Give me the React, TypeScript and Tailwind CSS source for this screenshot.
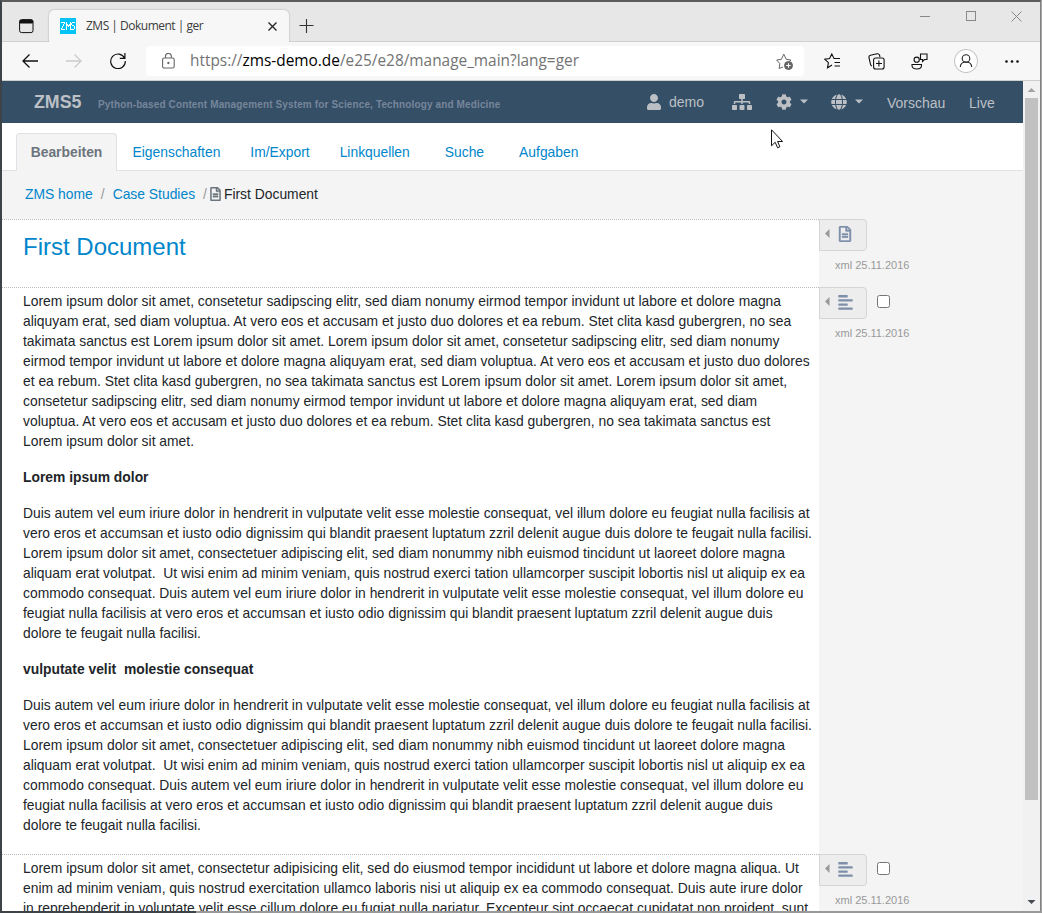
import type { ReactNode } from "react";
import { FaUser, FaSitemap, FaCog, FaGlobe, FaRegFileAlt } from "react-icons/fa";

const INTRO = [
  "Lorem ipsum dolor sit amet, consetetur sadipscing elitr, sed diam nonumy eirmod tempor invidunt ut labore et dolore magna",
  "aliquyam erat, sed diam voluptua. At vero eos et accusam et justo duo dolores et ea rebum. Stet clita kasd gubergren, no sea",
  "takimata sanctus est Lorem ipsum dolor sit amet. Lorem ipsum dolor sit amet, consetetur sadipscing elitr, sed diam nonumy",
  "eirmod tempor invidunt ut labore et dolore magna aliquyam erat, sed diam voluptua. At vero eos et accusam et justo duo dolores",
  "et ea rebum. Stet clita kasd gubergren, no sea takimata sanctus est Lorem ipsum dolor sit amet. Lorem ipsum dolor sit amet,",
  "consetetur sadipscing elitr, sed diam nonumy eirmod tempor invidunt ut labore et dolore magna aliquyam erat, sed diam",
  "voluptua. At vero eos et accusam et justo duo dolores et ea rebum. Stet clita kasd gubergren, no sea takimata sanctus est",
  "Lorem ipsum dolor sit amet.",
];

const DUIS = [
  "Duis autem vel eum iriure dolor in hendrerit in vulputate velit esse molestie consequat, vel illum dolore eu feugiat nulla facilisis at",
  "vero eros et accumsan et iusto odio dignissim qui blandit praesent luptatum zzril delenit augue duis dolore te feugait nulla facilisi.",
  "Lorem ipsum dolor sit amet, consectetuer adipiscing elit, sed diam nonummy nibh euismod tincidunt ut laoreet dolore magna",
  "aliquam erat volutpat.  Ut wisi enim ad minim veniam, quis nostrud exerci tation ullamcorper suscipit lobortis nisl ut aliquip ex ea",
  "commodo consequat. Duis autem vel eum iriure dolor in hendrerit in vulputate velit esse molestie consequat, vel illum dolore eu",
  "feugiat nulla facilisis at vero eros et accumsan et iusto odio dignissim qui blandit praesent luptatum zzril delenit augue duis",
  "dolore te feugait nulla facilisi.",
];

const LAST = [
  "Lorem ipsum dolor sit amet, consectetur adipisicing elit, sed do eiusmod tempor incididunt ut labore et dolore magna aliqua. Ut",
  "enim ad minim veniam, quis nostrud exercitation ullamco laboris nisi ut aliquip ex ea commodo consequat. Duis aute irure dolor",
  "in reprehenderit in voluptate velit esse cillum dolore eu fugiat nulla pariatur. Excepteur sint occaecat cupidatat non proident, sunt",
];

function Paragraph({ lines }: { lines: string[] }) {
  return (
    <p className="mb-4 text-[13.875px] leading-5 whitespace-pre text-[#212529]">
      {lines.map((line, i) => (
        <span key={i} className="block">
          {line}
        </span>
      ))}
    </p>
  );
}

function Subheading({ children }: { children: ReactNode }) {
  return (
    <h2 className="mb-4 text-[13.875px] leading-5 font-bold whitespace-pre text-[#212529]">{children}</h2>
  );
}

function DocIcon() {
  return (
    <FaRegFileAlt className="-ml-[2px] mb-[2px] size-4" stroke="currentColor" strokeWidth={14} />
  );
}

function TextIcon() {
  return (
    <svg className="-ml-px mb-px h-[15px] w-[15px]" viewBox="0 0 15 15" fill="currentColor">
      <rect x=".3" y="0" width="9.400" height="2.400" rx=".5" />
      <rect x=".3" y="4.200" width="14.400" height="2.400" rx=".5" />
      <rect x=".3" y="8.400" width="9.400" height="2.400" rx=".5" />
      <rect x=".3" y="12.400" width="14.400" height="2.400" rx=".5" />
    </svg>
  );
}

function DownCaret() {
  return (
    <svg className="mb-px ml-2 h-[5px] w-2" viewBox="0 0 8 5" fill="currentColor">
      <path d="M0 .5h8L4 4.500z" />
    </svg>
  );
}

function Section({
  icon,
  checkbox,
  height,
  children,
}: {
  icon: ReactNode;
  checkbox?: boolean;
  height: string;
  children: ReactNode;
}) {
  return (
    <section className={`flex shrink-0 ${height}`}>
      <div className="w-[817px] shrink-0 overflow-hidden border-t border-dotted border-[#bbb] bg-white pl-[21px]">
        {children}
      </div>
      <aside className="flex-1">
        <div className="flex items-center">
          <div className="flex h-8 w-12 items-center rounded-r-[4px] border border-[#d5d5d5] bg-[#ededed]">
            <svg className="mb-[3px] ml-[5px] h-[9px] w-[5px]" viewBox="0 0 5 9" fill="#999">
              <path d="M4.500 0v9L0 4.500z" />
            </svg>
            <span className="ml-[9px] text-[#7e8fa9]">{icon}</span>
          </div>
          {checkbox && (
            <span className="mb-[3px] ml-[10px] size-[13px] rounded-[2.5px] border border-[#767676] bg-white" />
          )}
        </div>
        <div className="mt-[6px] ml-4 text-[11px] leading-4 text-[#999]">xml 25.11.2016</div>
      </aside>
    </section>
  );
}

function TitleBar() {
  return (
    <div className="flex h-10 shrink-0 border-b border-[#d0d0d0] bg-[#e7e7e7]">
      <svg className="mt-[17px] ml-[17px] size-[15px]" viewBox="0 0 15 15" fill="none" stroke="#111">
        <rect x=".6" y=".6" width="13.4" height="13" rx="2" />
        <path d="M1 1.5h12.6v2.500H1z" fill="#111" />
      </svg>
      <div className="mt-2 -mb-px ml-[15px] flex h-8 w-[240px] items-center rounded-t-[5px] bg-[#f7f7f7] shadow-[0_0_2px_rgba(0,0,0,0.3)] [clip-path:inset(-3px_-3px_0_-3px)]">
        <svg className="ml-[11px] size-4" viewBox="0 0 16 16" shapeRendering="crispEdges">
          <rect width="16" height="16" fill="#00c3f7" />
          <path
            d="M1 4.500h4M4.500 5v1M3.500 6v2M2.500 8v2M1.500 10v1M1 11.500h4M6.500 4v8M10.500 4v8M7.500 6v2M9.500 6v2M8.500 7v2M15 4.500h-3M11.500 5v2M12 7.500h2M14.500 8v3M11 11.500h3"
            stroke="#fff"
            fill="none"
          />
        </svg>
        <span className="ml-[10px] font-['Open_Sans','Noto_Sans',sans-serif] text-[12px] tracking-[-0.5px] text-[#3b3b3b]">
          ZMS | Dokument | ger
        </span>
        <svg className="mr-3 ml-auto size-[9px]" viewBox="0 0 9 9" stroke="#222" strokeWidth="1.3">
          <path d="M.5.5l8 8M8.500.5l-8 8" />
        </svg>
      </div>
      <svg className="mt-[17px] ml-[10px] size-[15px]" viewBox="0 0 15 15" stroke="#333" fill="none">
        <path d="M.5 6.500h14M7.500 0v14" strokeWidth="1.1" />
      </svg>
      <div className="ml-auto flex gap-[35px] pt-[9px] pr-[18px]">
        <svg className="size-[11px]" viewBox="0 0 11 11" stroke="#888" fill="none">
          <path d="M1 5.500h10" />
        </svg>
        <svg className="size-[11px]" viewBox="0 0 11 11" stroke="#888" fill="none">
          <rect x="1.500" y=".5" width="9" height="9" />
        </svg>
        <svg className="size-[11px]" viewBox="0 0 11 11" stroke="#888" fill="none">
          <path d="M.5.5l10 10M10.500.5l-10 10" />
        </svg>
      </div>
    </div>
  );
}

function Toolbar() {
  return (
    <div className="flex h-[39px] shrink-0 items-center border-b border-[#ccd0cc] bg-[#f7f7f7] text-black">
      <svg className="ml-5 h-[14px] w-4" viewBox="0 0 16 14" fill="none" stroke="#111" strokeWidth="1.3">
        <path d="M16 7H1M7.500.5L1 7l6.500 6.500" />
      </svg>
      <svg className="ml-7 h-[14px] w-4" viewBox="0 0 16 14" fill="none" stroke="#ccc" strokeWidth="1.3">
        <path d="M0 7h15M8.500.5L15 7l-6.500 6.500" />
      </svg>
      <svg className="ml-[28px] size-4" viewBox="0 0 16 16" fill="none" stroke="#111" strokeWidth="1.200">
        <path d="M14.600 5.200A7.300 7.300 0 1 0 15.300 8M14.900 0v5.300H9.800" />
      </svg>
      <div className="ml-5 flex h-[30px] w-[658px] items-center rounded-[4px] bg-white">
        <svg className="ml-4 h-4 w-[13px]" viewBox="0 0 13 16" fill="none" stroke="#666" strokeWidth="1.1">
          <rect x=".6" y="5" width="11.600" height="10" rx="1.500" />
          <path d="M3.500 5V3a2.900 2.500 0 0 1 5.800 0v2" />
          <circle cx="6.400" cy="10" r=".6" fill="#666" />
        </svg>
        <span className="ml-[15px] font-['Open_Sans','Noto_Sans',sans-serif] text-[15.400px] whitespace-nowrap text-[#737373]">
          https://<span className="text-black">zms-demo.de</span>/e25/e28/manage_main?lang=ger
        </span>
        <svg className="mr-[11px] ml-auto size-[17px]" viewBox="0 0 17 17" fill="none" stroke="#666">
          <path d="M7 14l-3.900 1.500.8-4.800L.7 7l4.700-.7L7.800 1.200l2.400 5.100 4.700.7-2 2" />
          <circle cx="12.500" cy="12.500" r="4" fill="#666" />
          <path d="M10.200 12.500h4.600M12.500 10.200v4.600" stroke="#fff" />
        </svg>
      </div>
      <svg className="ml-[20px] h-[16px] w-[17px]" viewBox="0 0 17 16" fill="none" stroke="#111" strokeWidth="1.1">
        <path d="M8 12l-4.500 2.800.9-5.100L.7 6.200l4.900-.7L7.800 1l2.200 4.500H16M10.500 9.500H16M10.500 13H16" />
      </svg>
      <svg className="ml-[27px] size-[17px]" viewBox="0 0 17 17" fill="none" stroke="#111" strokeWidth="1.1">
        <path d="M4 13c-1-.3-1.300-.8-1.500-1.700L1 4.700C.7 3.400 1.300 2.600 2.500 2.300L9 .8c1.200-.3 2 .2 2.500 1.200L12 4" />
        <rect x="5.600" y="5" width="10.500" height="11" rx="2" />
        <path d="M10.900 7.500v6M8 10.500h6" />
      </svg>
      <svg className="ml-[26px] size-[17px]" viewBox="0 0 17 17" fill="none" stroke="#111" strokeWidth="1.1">
        <circle cx="5.700" cy="6.700" r="2.600" />
        <path d="M1 11.500h9.500v1c0 2-1.800 3.500-4.700 3.500S1 14.500 1 12.500zM9.500 1H16v5.500h-2.500l-2 2v-2h-2z" />
      </svg>
      <svg className="ml-[26px] size-6" viewBox="0 0 24 24" fill="none" stroke="#222" strokeWidth="1.1">
        <circle cx="12" cy="12" r="11.500" fill="#fff" stroke="#c5c5c5" />
        <circle cx="12" cy="9.500" r="3.800" />
        <path d="M6.300 18c.2-3 2-5 5.700-5s5.500 2 5.700 5" />
      </svg>
      <svg className="ml-[27px] h-[3px] w-[14px]" viewBox="0 0 14 3" fill="#111">
        <circle cx="1.500" cy="1.500" r="1.300" />
        <circle cx="7" cy="1.500" r="1.300" />
        <circle cx="12.500" cy="1.500" r="1.300" />
      </svg>
    </div>
  );
}

function NavBar() {
  return (
    <nav className="flex h-[42px] shrink-0 items-center bg-[#354f67] text-[14px] text-[#bcc0c5]">
      <strong className="ml-8 w-16 text-[17.800px]">ZMS5</strong>
      <span className="w-[548px] pt-[5px] text-[10px] font-bold tracking-[0.13px] whitespace-nowrap text-[#75869a]">
        Python-based Content Management System for Science, Technology and Medicine
      </span>
      <FaUser className="h-4 w-4" />
      <span className="ml-[7px] w-[63px]">demo</span>
      <FaSitemap className="h-4 w-5" />
      <FaCog className="ml-6 size-4" />
      <DownCaret />
      <FaGlobe className="ml-[23px] size-4" />
      <DownCaret />
      <span className="ml-6 w-[82px] pt-[2px]">Vorschau</span>
      <span className="pt-[2px]">Live</span>
    </nav>
  );
}

function Tabs() {
  return (
    <div className="flex h-12 shrink-0 items-end border-b border-[#dee2e6] bg-white text-[13.875px] text-[#0086cb]">
      <div className="-mb-px ml-[14px] flex h-[38px] w-[101px] items-center justify-center rounded-t-[4px] border border-b-0 border-[#dee2e6] bg-[#f4f4f4] font-bold text-[#6c757d]">
        Bearbeiten
      </div>
      <div className="flex h-[37px] items-center gap-[30px] pt-px pl-[15.5px]">
        <span>Eigenschaften</span>
        <span>Im/Export</span>
        <span>Linkquellen</span>
        <span className="ml-[5px]">Suche</span>
        <span className="ml-[5px]">Aufgaben</span>
      </div>
    </div>
  );
}

function ScrollBar() {
  return (
    <div className="flex w-[17px] shrink-0 flex-col items-center bg-[#f1f1f1]">
      <svg className="h-[17px] w-[17px] shrink-0" viewBox="0 0 17 17" fill="#a3a3a3">
        <path d="M4.500 11L8.500 7l4 4z" />
      </svg>
      <div className="h-[702px] w-[13px] shrink-0 bg-[#c1c1c1]" />
      <svg className="mt-auto h-[17px] w-[17px] shrink-0" viewBox="0 0 17 17" fill="#444a50">
        <path d="M4.500 6L8.500 10l4-4z" />
      </svg>
    </div>
  );
}

export default function App() {
  return (
    <div className="relative flex h-[913px] w-[1042px] flex-col overflow-hidden bg-[#a5a5a5] font-['Liberation_Sans',Arial,sans-serif]">
      <div className="flex h-[911px] w-[1041px] shrink-0 flex-col border-t-2 border-r border-l-2 border-t-[#5c5c5c] border-r-[#828282] border-l-[#3d4347]">
        <TitleBar />
        <Toolbar />
        <div className="flex min-h-0 flex-1">
          <main className="flex w-[1021px] shrink-0 flex-col overflow-hidden bg-[#f4f4f4]">
            <NavBar />
            <Tabs />
            <div className="flex h-12 shrink-0 items-center pb-[2px] pl-[23px] text-[13.875px] text-[#212529]">
              <span className="text-[#0086cb]">ZMS home</span>
              <span className="mx-2 text-[#999]">/</span>
              <span className="text-[#0086cb]">Case Studies</span>
              <span className="ml-2 text-[#999]">/</span>
              <FaRegFileAlt
                className="mx-[3px] h-[14px] w-[11px] text-[#6c757d]"
                stroke="currentColor"
                strokeWidth={14}
              />
              <span>First Document</span>
            </div>
            <Section height="h-[68px]" icon={<DocIcon />}>
              <h1 className="mt-[12px] text-[24px] leading-[30px] text-[#0086cb]">First Document</h1>
            </Section>
            <Section height="h-[567px]" checkbox icon={<TextIcon />}>
              <div className="pt-[3px]">
                <Paragraph lines={INTRO} />
                <Subheading>Lorem ipsum dolor</Subheading>
                <Paragraph lines={DUIS} />
                <Subheading>{"vulputate velit  molestie consequat"}</Subheading>
                <Paragraph lines={DUIS} />
              </div>
            </Section>
            <Section height="h-[80px]" checkbox icon={<TextIcon />}>
              <div className="pt-[3px]">
                <Paragraph lines={LAST} />
              </div>
            </Section>
          </main>
          <ScrollBar />
        </div>
      </div>
      <div className="flex h-[2px] shrink-0">
        <div className="w-[196px] bg-[#3d4347]" />
        <div className="flex-1 bg-[#999]" />
      </div>
      <svg className="absolute top-[129px] left-[771px] h-5 w-3" viewBox="0 0 12 20" fill="#fff" stroke="#111">
        <path d="M.5.8v16l3.700-3.500 2.400 5.500 2.300-1-2.300-5.300h5z" />
      </svg>
    </div>
  );
}
